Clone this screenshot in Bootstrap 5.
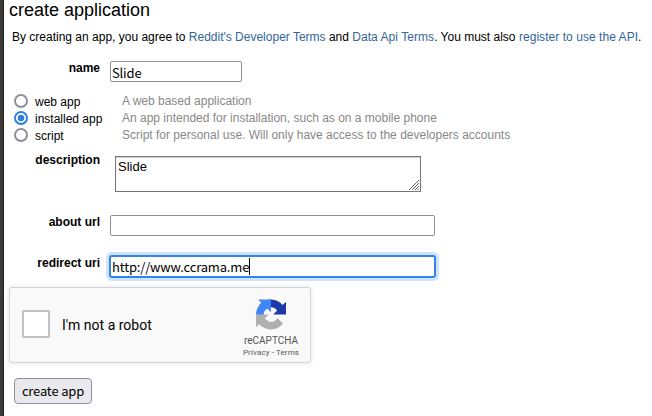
<!DOCTYPE html>
<html lang="en">
<head>
<meta charset="utf-8">
<title>create application</title>
<link href="https://cdn.jsdelivr.net/npm/bootstrap@5.3.0/dist/css/bootstrap.min.css" rel="stylesheet">
<style>
body{font:12px/17px "Liberation Sans",Arial,sans-serif;color:#000;background:#fff;overflow:hidden}
.page{height:416px;border-left:3px solid #3c3a37;box-shadow:inset 1px 0 #1f1e1c;padding-left:6px}
h1{font-size:18px;line-height:20px;height:29px;font-weight:400;margin:0}
.terms{height:32px;padding-left:3px;white-space:nowrap}
.terms .spaced{letter-spacing:.05px}
a{color:#369;text-decoration:none}
.field-name{width:91px;text-align:right;font-weight:700;line-height:14px;flex:none}
.form-control{font:13px/17px "Noto Sans CJK SC",sans-serif;letter-spacing:-.17px;color:#000;border:1px solid #8f8f9d;border-radius:2px;padding:1px 1px 0;height:21px;min-height:0;margin-left:10px}
.form-control:focus{color:#000}
.name-row{height:31px}
.name-row .form-control{width:132px}
.kind{height:17px;padding-left:5px}
.form-check-input{width:14px;height:14px;margin:0 7px 0 0;border:2px solid #8f8f9d;flex:none}
.form-check-input:checked{background:#fff radial-gradient(circle,#2e7fe2 3px,#fff 3.7px);border-color:#2e7fe2}
.kind label{width:87px;padding-top:4px}
.kind span{color:#888;padding-top:1px}
.desc-row{height:62px;margin-top:10px}
.desc-row .form-control{font:13px/15px "Liberation Sans",sans-serif;letter-spacing:0;width:306px;height:36px;border-color:#777;border-radius:0;margin:3px 0 0 15px;padding:2px 2px;resize:none;box-shadow:inset 0 1px 1px #ccc;overflow:hidden}
.grip{position:absolute;right:2px;bottom:2px}
.url-row{height:41px}
.url-row .form-control{width:325px}
.url-row .active-field{width:327px;height:23px;margin:-1px 0 0 9px;border:2px solid #3584e4;border-radius:3px;box-shadow:0 0 0 3px #cce4ff;padding:1px 1px 0;line-height:18px}
.caret{display:inline-block;width:1px;height:17px;background:#000;vertical-align:top}
.captcha{width:302px;height:76px;background:#f9f9f9;border:1px solid #d3d3d3;border-radius:3px;box-shadow:0 0 4px 1px rgba(0,0,0,.08);font-family:Roboto,sans-serif;margin-top:-10px}
.tick{width:28px;height:28px;border:2px solid #c1c1c1;border-radius:2px;background:#fff;margin:-3px 12px 0 12px}
.robot{font-size:14px}
.brand{width:78px;padding-top:11px;color:#555}
.brand b{font-weight:400;font-size:10px;line-height:12px;margin-top:5px}
.brand small{font-size:8px;line-height:10px;margin-top:1px;white-space:pre;letter-spacing:.12px}
.create-btn{font:13px/18px "Noto Sans CJK SC",sans-serif;letter-spacing:-.17px;color:#000;background:#e9e9ed;border:1px solid #8f8f9d;border-radius:4px;padding:3px 0;width:78px;height:26px;margin:15px 0 0 5px}
</style>
</head>
<body>
<main class="page d-flex flex-column">
<h1>create application</h1>
<p class="terms mb-0">By creating an app, you agree to <a href="#">Reddit's Developer Terms</a> and <a href="#" class="spaced">Data Api Terms</a>. You must also <a href="#" class="spaced">register to use the API</a>.</p>
<div class="name-row d-flex align-items-start"><label class="field-name">name</label><input class="form-control" value="Slide"></div>
<div class="kind d-flex align-items-center"><input class="form-check-input" type="radio" name="kind" id="k1"><label for="k1">web app</label><span>A web based application</span></div>
<div class="kind d-flex align-items-center"><input class="form-check-input" type="radio" name="kind" id="k2" checked><label for="k2">installed app</label><span>An app intended for installation, such as on a mobile phone</span></div>
<div class="kind d-flex align-items-center"><input class="form-check-input" type="radio" name="kind" id="k3"><label for="k3">script</label><span>Script for personal use. Will only have access to the developers accounts</span></div>
<div class="desc-row d-flex align-items-start"><label class="field-name">description</label><div class="position-relative"><textarea class="form-control">Slide</textarea><svg class="grip" width="10" height="10" viewBox="0 0 10 10" stroke="#666" fill="none"><path d="M0 10 10 0M3 10 10 3M6 10 10 6M8.500 10 10 8.500"/></svg></div></div>
<div class="url-row d-flex align-items-start"><label class="field-name">about url</label><input class="form-control"></div>
<div class="url-row d-flex align-items-start"><label class="field-name">redirect uri</label><div class="form-control active-field">http://www.ccrama.me<span class="caret"></span></div></div>
<section class="captcha d-flex align-items-center flex-shrink-0">
<div class="tick"></div><span class="robot">I'm not a robot</span>
<div class="brand ms-auto align-self-start d-flex flex-column align-items-center">
<svg width="30" height="31" viewBox="0 0 64 64"><path fill="#1c3aa9" d="M64 31.955l-.033-1.370V4.687l-7.160 7.160C50.948 4.674 42.033.093 32.050.093c-10.400 0-19.622 4.960-25.458 12.640l11.736 11.860a15.550 15.550 0 0 1 4.754-5.334c2.050-1.600 4.952-2.906 8.968-2.906.485 0 .860.057 1.135.163 4.976.393 9.288 3.140 11.828 7.124l-8.307 8.307L64 31.953"/><path fill="#4285f4" d="M31.862.094l-1.370.033H4.594l7.160 7.160C4.580 13.147 0 22.060 0 32.046c0 10.400 4.960 19.622 12.640 25.458L24.500 45.768a15.550 15.550 0 0 1-5.334-4.754c-1.600-2.050-2.906-4.952-2.906-8.968 0-.485.057-.860.163-1.135.393-4.976 3.140-9.288 7.124-11.828l8.307 8.307L31.860.095"/><path fill="#b0b0b0" d="M.001 32.045l.033 1.370v25.898l7.160-7.160c5.860 7.173 14.774 11.754 24.760 11.754 10.400 0 19.622-4.960 25.458-12.640l-11.736-11.860a15.550 15.550 0 0 1-4.754 5.334c-2.050 1.600-4.952 2.906-8.968 2.906-.485 0-.860-.057-1.135-.163-4.976-.393-9.288-3.140-11.828-7.124l8.307-8.307L0 32.045"/></svg>
<b>reCAPTCHA</b><small>Privacy - Terms</small>
</div>
</section>
<button class="btn create-btn flex-shrink-0">create app</button>
</main>
<script src="https://cdn.jsdelivr.net/npm/bootstrap@5.3.0/dist/js/bootstrap.bundle.min.js"></script>
</body>
</html>
